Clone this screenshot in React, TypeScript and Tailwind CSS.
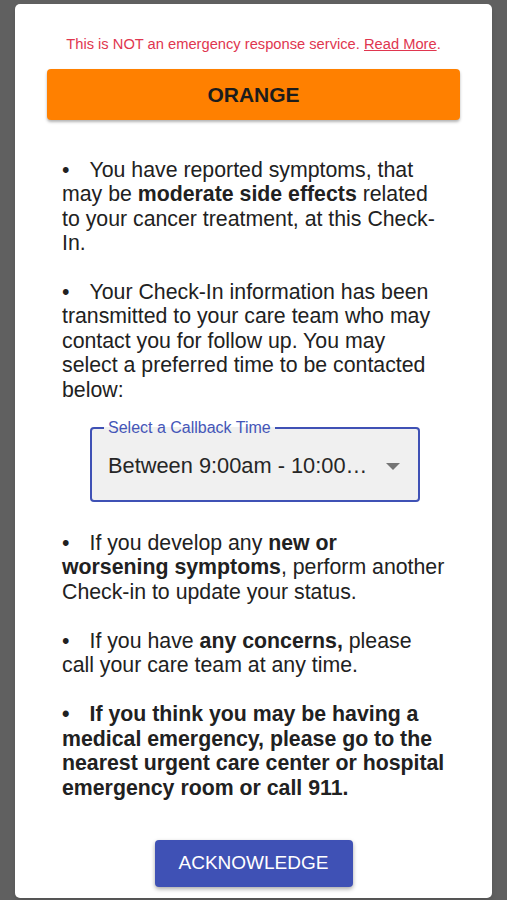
import { ReactNode } from "react"

function Bullet({ children, className = "" }: { children: ReactNode; className?: string }) {
  return <p className={`before:pr-[20px] before:content-['•'] ${className}`}>{children}</p>
}

export default function App() {
  return (
    <main
      className="min-h-screen bg-[#606060] pt-[4px] pb-[3px]"
      style={{ fontFamily: '"Liberation Sans", Arial, sans-serif' }}
    >
      <div className="mx-auto w-[477px] rounded-[5px] bg-white px-[32px] pt-[32px] pb-[11px] shadow-md">
        {/* Disclaimer */}
        <p className="text-center text-[14.7px] leading-[17px] text-[#e0364f]">
          This is NOT an emergency response service. <span className="underline">Read More</span>.
        </p>

        {/* Severity banner */}
        <div className="mt-[16px] flex h-[51px] items-center justify-center rounded-[4px] bg-[#ff8000] shadow-[0_2px_3px_rgba(0,0,0,0.3)]">
          <span className="text-[21px] font-bold text-[#1c1c1c]">ORANGE</span>
        </div>

        {/* Messages */}
        <div className="mt-[38px] ml-[15px] mr-[12px] text-[21.3px] leading-[24.4px] text-[#212121]">
          <Bullet>
            You have reported symptoms, that may be <b>moderate side effects</b> related to your cancer treatment,
            at this Check-In.
          </Bullet>

          <Bullet className="mt-[24.4px]">
            Your Check-In information has been transmitted to your care team who may contact you for follow up. You
            may
            <br />
            select a preferred time to be contacted below:
          </Bullet>

          <div className="mt-[18px] flex justify-center">
            <fieldset className="w-[330px] min-w-0 rounded-[4px] border-2 border-[#3f51b5] bg-[#f0f0f0] pl-4 pr-[18px]">
              <legend className="-ml-1 px-1 text-[16px] leading-[16px] text-[#4556b8]">Select a Callback Time</legend>
              <div className="flex h-[64px] items-center pb-[4px]">
                <span className="min-w-0 flex-1 truncate pr-[14px] text-[21.8px] text-[#262626]">
                  Between 9:00am - 10:00am
                </span>
                <svg width="14" height="7" viewBox="0 0 14 7" className="shrink-0">
                  <polygon points="0,0 14,0 7,7" fill="#757575" />
                </svg>
              </div>
            </fieldset>
          </div>

          <Bullet className="mt-[29px]">
            If you develop any <b>new or worsening symptoms</b>, perform another Check-in to update your status.
          </Bullet>

          <Bullet className="mt-[24.4px]">
            If you have <b>any concerns,</b> please call your care team at any time.
          </Bullet>

          <Bullet className="mt-[25px] font-bold">
            If you think you may be having a medical emergency, please go to the nearest urgent care center or
            hospital emergency room or call 911.
          </Bullet>
        </div>

        {/* Action */}
        <div className="mt-[40px] flex justify-center">
          <button className="h-[47px] w-[198px] rounded-[4px] bg-[#3f51b5] text-[19px] text-white shadow-[0_2px_4px_rgba(0,0,0,0.35)]">
            ACKNOWLEDGE
          </button>
        </div>
      </div>
    </main>
  )
}
